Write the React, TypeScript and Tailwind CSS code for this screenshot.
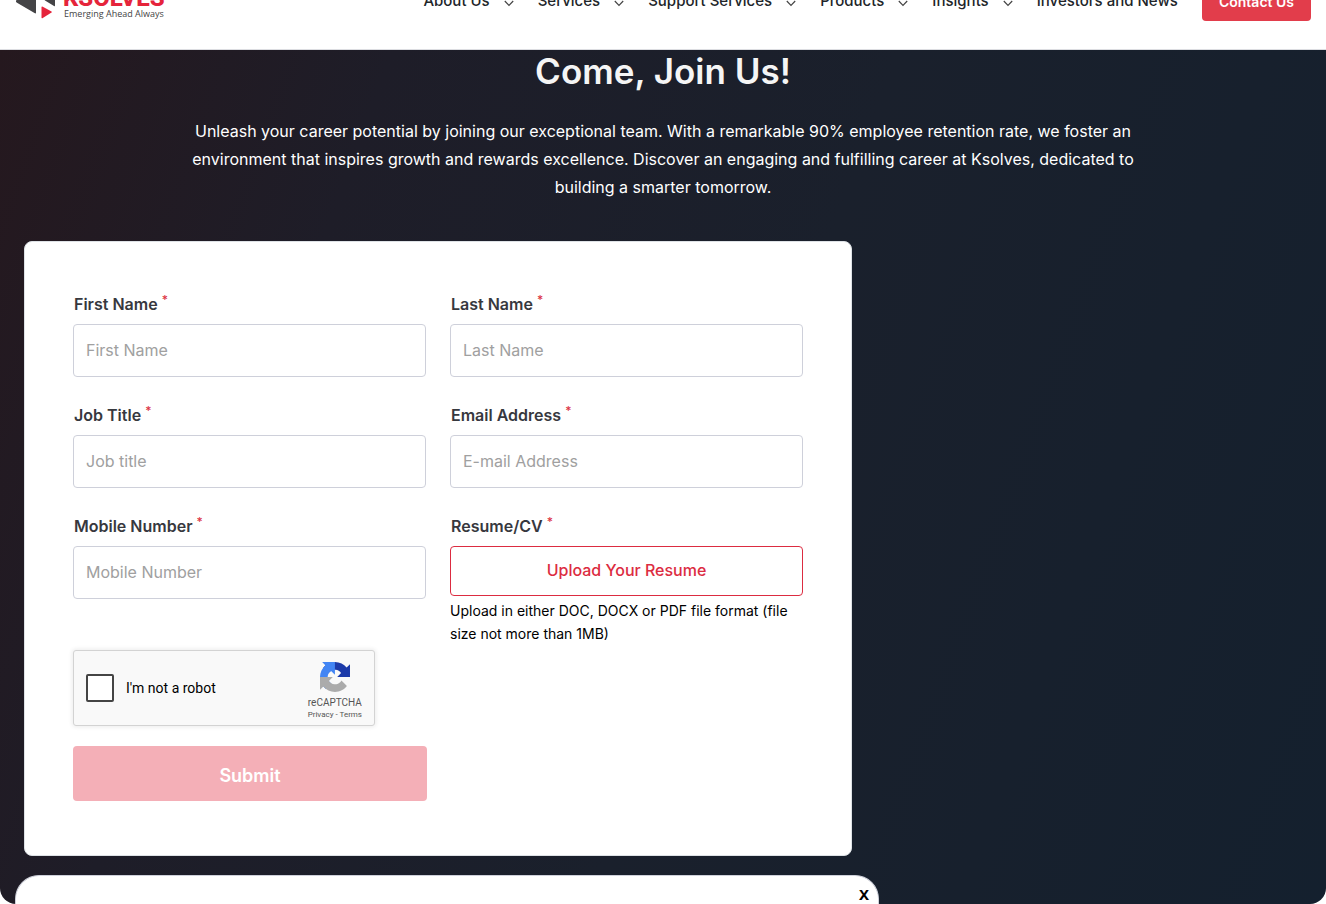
import type { ReactNode } from "react";

const links = [
  { label: "About Us", menu: true },
  { label: "Services", menu: true },
  { label: "Support Services", menu: true },
  { label: "Products", menu: true },
  { label: "Insights", menu: true },
  { label: "Investors and News", menu: false },
];

function Chevron() {
  return (
    <svg viewBox="0 0 10 10" className="h-2.5 w-2.5" fill="none" stroke="#444" strokeWidth="1.2" aria-hidden="true">
      <path d="M.8 4 5 8.300 9.200 4" />
    </svg>
  );
}

function Logo() {
  return (
    <a href="#home" className="flex items-end gap-2 pb-1" aria-label="Ksolves home">
      <svg viewBox="0 0 40 38" className="h-[38px] w-10" aria-hidden="true">
        <path d="M0 19.500 19 8.500Q20 8 20 9V31.500Q20 33 18.500 32L1 21.800Q-.4 21 0 19.500Z" fill="#444446" />
        <path d="M25 14 38 6.500Q39 6 39 7.500V24.500Q39 25.700 38 25L29 19.500Z" fill="#444446" />
        <path d="M25.500 26.500Q25.500 25 26.800 25.700L35.500 30.500Q36.300 31 35.500 31.600L26.800 37Q25.500 37.700 25.500 36.500Z" fill="#e5243b" />
      </svg>
      <span className="-ml-px flex flex-col">
        <span className="font-['Roboto'] text-2xl leading-[22px] font-extrabold text-[#e5243b]">KSOLVES</span>
        <span className="pb-px pl-px font-['Open_Sans'] text-[9px] leading-[9px] text-[#444]">Emerging Ahead Always</span>
      </span>
    </a>
  );
}

function Header() {
  return (
    <header className="relative z-10 -mt-[46px] flex h-24 items-center justify-between border-b border-[#dcdde1] bg-white pr-[15px] pl-4">
      <Logo />
      <nav className="flex items-center gap-6">
        {links.map((l) => (
          <a key={l.label} href="#nav" className="flex items-center gap-3.5 text-[15px] font-medium text-[#212529]">
            {l.label}
            {l.menu && <Chevron />}
          </a>
        ))}
        <a href="#contact" className="rounded bg-[#e23d4b] px-[17px] py-2 text-sm leading-[22px] font-semibold text-white">
          Contact Us
        </a>
      </nav>
    </header>
  );
}

function Field({ id, label, children }: { id: string; label: string; children: ReactNode }) {
  return (
    <div>
      <label htmlFor={id} className="mb-1.5 block pl-px leading-7 font-semibold text-[#37383e]">
        {label} <sup className="text-xs leading-none font-medium text-[#dc3545]">*</sup>
      </label>
      {children}
    </div>
  );
}

function TextField({ id, label, placeholder, type = "text" }: { id: string; label: string; placeholder: string; type?: string }) {
  return (
    <Field id={id} label={label}>
      <input
        id={id}
        type={type}
        placeholder={placeholder}
        className="block h-[53px] w-full rounded border border-[#ced0da] bg-white px-3 pb-0.5 text-base placeholder:text-[#a0a0a0]"
      />
    </Field>
  );
}

function Recaptcha() {
  return (
    <div className="mt-[5px] flex h-[76px] w-[302px] items-center justify-between rounded-[3px] border border-[#d3d3d3] bg-[#f9f9f9] pr-3 pl-3 font-['Roboto'] shadow-[0_0_4px_1px_rgba(0,0,0,0.08)]">
      <label className="flex items-center gap-3 text-sm text-black">
        <input type="checkbox" className="h-7 w-7 appearance-none rounded-xs border-2 border-[#444] bg-white" />
        I'm not a robot
      </label>
      <div className="flex flex-col items-center pt-1.5 text-[#555]">
        <svg viewBox="0 0 64 64" className="h-[30px] w-[30px]" aria-hidden="true">
          <path d="M64 31.955l-.033-1.37V4.687l-7.16 7.16C50.948 4.674 42.033.093 32.05.093c-10.4 0-19.622 4.96-25.458 12.64l11.736 11.86a15.55 15.55 0 0 1 4.754-5.334c2.05-1.6 4.952-2.906 8.968-2.906.485 0 .86.057 1.135.163 4.976.393 9.288 3.14 11.828 7.124l-8.307 8.307L64 31.953" fill="#1c3aa9" />
          <path d="M31.862.094l-1.37.033H4.594l7.16 7.16C4.58 13.147 0 22.06 0 32.046c0 10.4 4.96 19.622 12.64 25.458L24.5 45.768a15.55 15.55 0 0 1-5.334-4.754c-1.6-2.05-2.906-4.952-2.906-8.968 0-.485.057-.86.163-1.135.393-4.976 3.14-9.288 7.124-11.828l8.307 8.307L31.86.095" fill="#4285f4" />
          <path d="M.001 32.045l.033 1.37v25.898l7.16-7.16c5.86 7.173 14.774 11.754 24.76 11.754 10.4 0 19.622-4.96 25.458-12.64l-11.736-11.86a15.55 15.55 0 0 1-4.754 5.334c-2.05 1.6-4.952 2.906-8.968 2.906-.485 0-.86-.057-1.135-.163-4.976-.393-9.288-3.14-11.828-7.124l8.307-8.307c-10.522.04-22.4.066-27.295-.005" fill="#ababab" />
        </svg>
        <span className="mt-[5px] text-[10px] leading-3">reCAPTCHA</span>
        <span className="text-[8px] leading-3">
          <a href="#privacy">Privacy</a> - <a href="#terms">Terms</a>
        </span>
      </div>
    </div>
  );
}

export default function App() {
  return (
    <div className="overflow-hidden bg-white font-['Inter',sans-serif]">
      <Header />
      <main className="rounded-b-2xl bg-[linear-gradient(110deg,#25181e_0%,#1e1d28_24%,#1a202c_55%,#14202e_100%)] px-6 pb-12">
        <h1 className="text-center text-[35px] leading-[43px] font-semibold text-[#f5f5f5]">Come, Join Us!</h1>
        <p className="mx-auto mt-6 max-w-[960px] text-center leading-7 text-white">
          Unleash your career potential by joining our exceptional team. With a remarkable 90% employee retention rate, we foster an
          environment that inspires growth and rewards excellence. Discover an engaging and fulfilling career at Ksolves, dedicated to
          building a smarter tomorrow.
        </p>
        <form className="mt-10 w-full max-w-[828px] rounded-lg border border-[#dee2e6] bg-white px-12 pt-12 pb-[54px]">
          <div className="grid grid-cols-2 gap-x-6 gap-y-6">
            <TextField id="first" label="First Name" placeholder="First Name" />
            <TextField id="last" label="Last Name" placeholder="Last Name" />
            <TextField id="job" label="Job Title" placeholder="Job title" />
            <TextField id="email" label="Email Address" placeholder="E-mail Address" type="email" />
            <TextField id="mobile" label="Mobile Number" placeholder="Mobile Number" type="tel" />
            <Field id="resume" label="Resume/CV">
              <button id="resume" type="button" className="block h-[50px] w-full rounded border border-[#dc2c41] pb-0.5 font-medium text-[#dc2c41]">
                Upload Your Resume
              </button>
              <p className="mt-[3px] text-sm leading-[23px] text-black">
                Upload in either DOC, DOCX or PDF file format (file size not more than 1MB)
              </p>
            </Field>
          </div>
          <Recaptcha />
          <div className="mt-5 grid grid-cols-2 gap-x-[22px]">
            <button type="submit" className="h-[55px] rounded bg-[#f4afb7] pt-1 text-lg font-semibold text-white">
              Submit
            </button>
          </div>
        </form>
      </main>
      <aside className="fixed bottom-0 left-[15px] flex h-[29px] w-full max-w-[864px] justify-end rounded-t-3xl border border-b-0 border-[#ced0da] bg-white pt-1.5 pr-[9px]">
        <button type="button" aria-label="Close" className="font-['Noto_Sans'] text-[15px] leading-6 font-bold text-black">
          X
        </button>
      </aside>
    </div>
  );
}
